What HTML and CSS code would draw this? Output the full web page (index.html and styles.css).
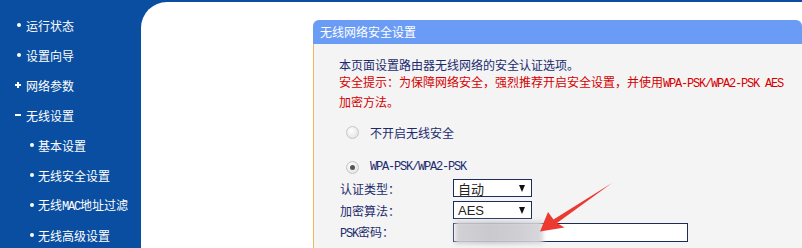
FILE: index.html
```html
<!DOCTYPE html>
<html lang="zh-CN">
<head>
  <meta charset="UTF-8">
  <title>无线网络安全设置</title>
  <link rel="stylesheet" href="styles.css">
</head>
<body>
  <div class="frame">
    <ul class="menu">
      <li class="item"><span class="mark dot"></span><span>运行状态</span></li>
      <li class="item"><span class="mark dot"></span><span>设置向导</span></li>
      <li class="item"><span class="mark plus"></span><span>网络参数</span></li>
      <li class="item"><span class="mark minus"></span><span>无线设置</span></li>
      <li class="item sub"><span class="mark dot"></span><span>基本设置</span></li>
      <li class="item sub"><span class="mark dot"></span><span>无线安全设置</span></li>
      <li class="item sub"><span class="mark dot"></span><span>无线<span class="mono">MAC</span>地址过滤</span></li>
      <li class="item sub"><span class="mark dot"></span><span>无线高级设置</span></li>
    </ul>

    <div class="content">
      <div class="panel">
        <div class="panel-title">无线网络安全设置</div>
        <div class="panel-body">
          <p class="intro">本页面设置路由器无线网络的安全认证选项。</p>
          <p class="warn">安全提示：为保障网络安全，强烈推荐开启安全设置，并使用<span class="mono">WPA-PSK/WPA2-PSK AES</span><br>加密方法。</p>

          <div class="choice first"><span class="radio"></span>不开启无线安全</div>
          <div class="choice"><span class="radio on"></span><span class="mono">WPA-PSK/WPA2-PSK</span></div>

          <div class="field">
            <span class="label">认证类型：</span>
            <span class="select">自动<span class="caret"></span></span>
          </div>
          <div class="field">
            <span class="label">加密算法：</span>
            <span class="select latin">AES<span class="caret"></span></span>
          </div>
          <div class="field">
            <span class="label"><span class="mono">PSK</span>密码：</span>
            <span class="textbox"><span class="smudge"></span></span>
          </div>
        </div>

        <!-- 标注箭头 -->
        <svg class="pointer" width="82" height="56" viewBox="0 0 82 56">
          <polygon points="5,51.5 13,32 18.5,39.5 77,3 22,43 29.5,47.5" fill="#ec3a30"/>
        </svg>
      </div>
    </div>
  </div>
</body>
</html>
```

FILE: styles.css
```css
body {
  margin: 0;
  overflow: hidden;
  font-family: 'Noto Sans CJK SC', sans-serif;
  font-size: 12px;
}

.frame {
  display: flex;
  height: 248px;
  overflow: hidden;
  background: #0a4ea1;
}

.mono {
  font-family: 'Liberation Mono', monospace;
  font-size: 12px;
  letter-spacing: -1.2px;
}

/* 左侧菜单 */
.menu {
  list-style: none;
  margin: 0;
  padding: 10px 0 0;
  width: 141px;
  flex-shrink: 0;
  color: #fff;
}

.item {
  display: flex;
  align-items: center;
  height: 30px;
  padding-left: 15px;
  white-space: nowrap;
}

.item.sub {
  padding-left: 28px;
}

.mark {
  position: relative;
  width: 11px;
  height: 12px;
  flex-shrink: 0;
}

.sub .mark {
  width: 10px;
}

.mark.dot::before,
.mark.plus::before,
.mark.plus::after,
.mark.minus::before {
  content: "";
  position: absolute;
  background: #fff;
}

.mark.dot::before {
  left: 2px;
  top: 4px;
  width: 4px;
  height: 4px;
  border-radius: 50%;
}

.mark.plus::before,
.mark.minus::before {
  left: 0;
  top: 5px;
  width: 6px;
  height: 2px;
}

.mark.plus::after {
  left: 2px;
  top: 3px;
  width: 2px;
  height: 6px;
}

/* 右侧内容 */
.content {
  flex: 1;
  margin-top: 2px;
  background: #fff;
  border-top-left-radius: 26px;
  padding: 18px 0 0 172px;
  min-width: 0;
}

.panel {
  position: relative;
  width: 489px;
}

.panel-title {
  height: 24px;
  line-height: 24px;
  padding-left: 7px;
  background: #6a9cf6;
  border-radius: 6px 6px 0 0;
  color: #fff;
  font-size: 12px;
}

.panel-body {
  box-sizing: border-box;
  height: 204px;
  padding: 12px 0 0 25px;
  background: #f4f4f4;
  border-left: 1px solid #f0b75a;
  color: #1c2b6e;
}

.panel-body p {
  margin: 0;
  line-height: 17px;
}

.warn {
  color: #d40000;
}

.choice {
  display: flex;
  align-items: center;
  height: 20px;
  margin-top: 15px;
  padding-left: 7px;
}

.choice.first {
  margin-top: 12px;
}

.radio {
  position: relative;
  width: 11px;
  height: 11px;
  margin-right: 11px;
  border: 1px solid #c6c6c6;
  border-radius: 50%;
  background: radial-gradient(circle at 40% 35%, #ffffff, #dcdcdc);
}

.radio.on::after {
  content: "";
  position: absolute;
  left: 3px;
  top: 3px;
  width: 5px;
  height: 5px;
  border-radius: 50%;
  background: #555;
}

.field {
  display: flex;
  align-items: center;
  height: 22px;
  margin-left: 1px;
}

.field:first-of-type {
  margin-top: 5px;
}

.label {
  width: 113px;
}

.select {
  box-sizing: border-box;
  display: flex;
  justify-content: space-between;
  align-items: center;
  width: 79px;
  height: 18px;
  padding: 0 6px 0 4px;
  border: 1px solid #1d2d5a;
  background: #fff;
  color: #222;
  font-size: 13px;
}

.select.latin {
  font-family: 'Liberation Sans', sans-serif;
  font-size: 13px;
}

.caret {
  width: 0;
  height: 0;
  border-left: 3.5px solid transparent;
  border-right: 3.5px solid transparent;
  border-top: 7px solid #111;
}

.textbox {
  position: relative;
  box-sizing: border-box;
  width: 235px;
  height: 19px;
  border: 1px solid #1d2d5a;
  background: #fff;
}

/* 打码区域 */
.smudge {
  position: absolute;
  left: 1px;
  top: -3px;
  width: 88px;
  height: 23px;
  background: linear-gradient(90deg, #d2d2d6 0%, #c9c9ce 40%, #cfcfd3 70%, #d8d8dc 100%);
  filter: blur(2px);
}

.pointer {
  position: absolute;
  left: 222px;
  top: 160px;
}
```
